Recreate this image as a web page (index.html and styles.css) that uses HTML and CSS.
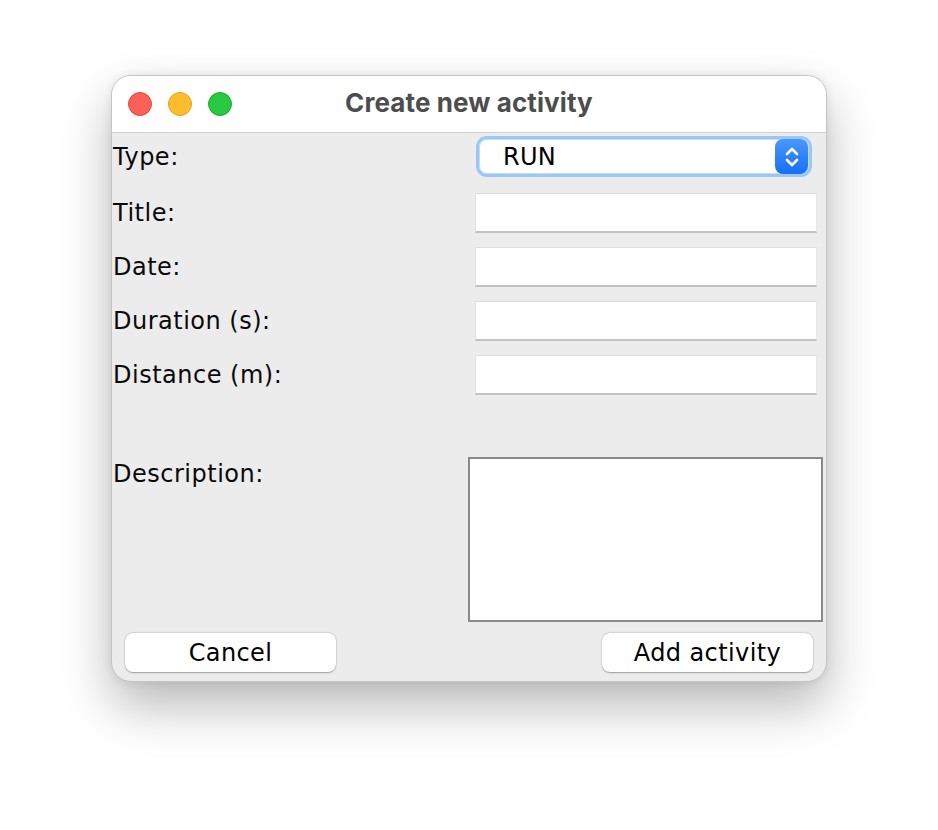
FILE: index.html
```html
<!DOCTYPE html>
<html>
<head>
<meta charset="utf-8">
<link rel="stylesheet" href="styles.css">
</head>
<body>
<div class="window">
  <div class="titlebar">
    <div class="lights">
      <span class="light red"></span>
      <span class="light yellow"></span>
      <span class="light green"></span>
    </div>
    <div class="title">Create new activity</div>
  </div>
  <div class="content">
    <div class="row row-type">
      <div class="label">Type:</div>
      <div class="combo">
        <span class="combo-value">RUN</span>
        <span class="combo-btn">
          <svg width="16" height="24" viewBox="0 0 16 24"><path d="M3 9 L8 4 L13 9 M3 15 L8 20 L13 15" fill="none" stroke="#fff" stroke-width="2.6" stroke-linecap="round" stroke-linejoin="round"/></svg>
        </span>
      </div>
    </div>
    <div class="row row-field">
      <div class="label">Title:</div>
      <div class="field"></div>
    </div>
    <div class="row row-field">
      <div class="label">Date:</div>
      <div class="field"></div>
    </div>
    <div class="row row-field">
      <div class="label">Duration (s):</div>
      <div class="field"></div>
    </div>
    <div class="row row-field">
      <div class="label">Distance (m):</div>
      <div class="field"></div>
    </div>
    <div class="row row-desc">
      <div class="label">Description:</div>
      <div class="textarea"></div>
    </div>
    <div class="buttons">
      <button class="btn">Cancel</button>
      <button class="btn">Add activity</button>
    </div>
  </div>
</div>
</body>
</html>
```
FILE: styles.css
```css
html, body {
  margin: 0;
  padding: 0;
  background: #ffffff;
}
body {
  width: 938px;
  height: 830px;
  padding: 75px 0 0 111px;
  box-sizing: border-box;
  font-family: "DejaVu Sans", sans-serif;
}
.window {
  width: 716px;
  height: 607px;
  box-sizing: border-box;
  border: 1px solid #c4c4c4;
  border-radius: 20px;
  overflow: hidden;
  background: #ececec;
  box-shadow: 0 24px 50px rgba(0,0,0,0.28), 0 0 10px rgba(0,0,0,0.08);
  display: flex;
  flex-direction: column;
}
.titlebar {
  height: 56px;
  background: #ffffff;
  border-bottom: 1px solid #d3d3d3;
  display: flex;
  align-items: center;
  position: relative;
}
.lights {
  display: flex;
  gap: 16px;
  padding-left: 16px;
}
.light {
  width: 24px;
  height: 24px;
  border-radius: 50%;
  box-sizing: border-box;
}
.red { background: #fe5f57; border: 1px solid #e2463f; }
.yellow { background: #febc2e; border: 1px solid #e1a116; }
.green { background: #28c840; border: 1px solid #14ae2a; }
.title {
  position: absolute;
  left: 0;
  right: 0;
  top: 0;
  height: 56px;
  line-height: 54px;
  text-align: center;
  font-family: "Inter", "Liberation Sans", sans-serif;
  font-weight: 700;
  font-size: 26px;
  letter-spacing: 0.1px;
  color: #4d4d4d;
}
.content {
  flex: 1;
  display: flex;
  flex-direction: column;
  padding: 3px 0 0 1px;
}
.row {
  display: flex;
  align-items: center;
}
.label {
  width: 362px;
  font-size: 24px;
  color: #0a0a0a;
  letter-spacing: 0.5px;
}
.row-type {
  height: 41px;
  margin-bottom: 16px;
}
.combo {
  margin-left: 1px;
  width: 336px;
  height: 41px;
  box-sizing: border-box;
  border: 3px solid #9cc6f6;
  border-radius: 11px;
  background: #fff;
  display: flex;
  align-items: center;
  justify-content: space-between;
  padding: 0 1px 0 24px;
  box-shadow: inset 0 0 0 1px #c4dcf8;
}
.combo-value {
  font-size: 24px;
  color: #000;
  letter-spacing: 0.3px;
}
.combo-btn {
  width: 33px;
  height: 35px;
  border-radius: 8px;
  background: linear-gradient(#4a97fb, #1570f2);
  display: flex;
  align-items: center;
  justify-content: center;
}
.row-field {
  height: 40px;
  margin-bottom: 14px;
}
.field {
  width: 342px;
  height: 40px;
  box-sizing: border-box;
  background: #fff;
  border-top: 1px solid #dcdcdc;
  border-left: 1px solid #e2e2e2;
  border-right: 1px solid #e8e8e8;
  border-bottom: 2px solid #c3c3c3;
}
.row-desc {
  align-items: flex-start;
  margin-top: 48px;
  height: 165px;
}
.row-desc .label {
  width: 355px;
  padding-top: 3px;
}
.textarea {
  width: 355px;
  height: 165px;
  box-sizing: border-box;
  background: #fff;
  border: 2px solid #8a8a8a;
}
.buttons {
  display: flex;
  justify-content: space-between;
  padding: 11px 13px 0 12px;
}
.btn {
  width: 211px;
  height: 39px;
  border: none;
  border-radius: 8px;
  background: #fff;
  box-shadow: 0 0.5px 1.5px rgba(0,0,0,0.3), 0 0 0 0.5px rgba(0,0,0,0.08);
  font-family: "DejaVu Sans", sans-serif;
  font-size: 24px;
  letter-spacing: 0.4px;
  color: #000;
  padding: 0;
}
```
